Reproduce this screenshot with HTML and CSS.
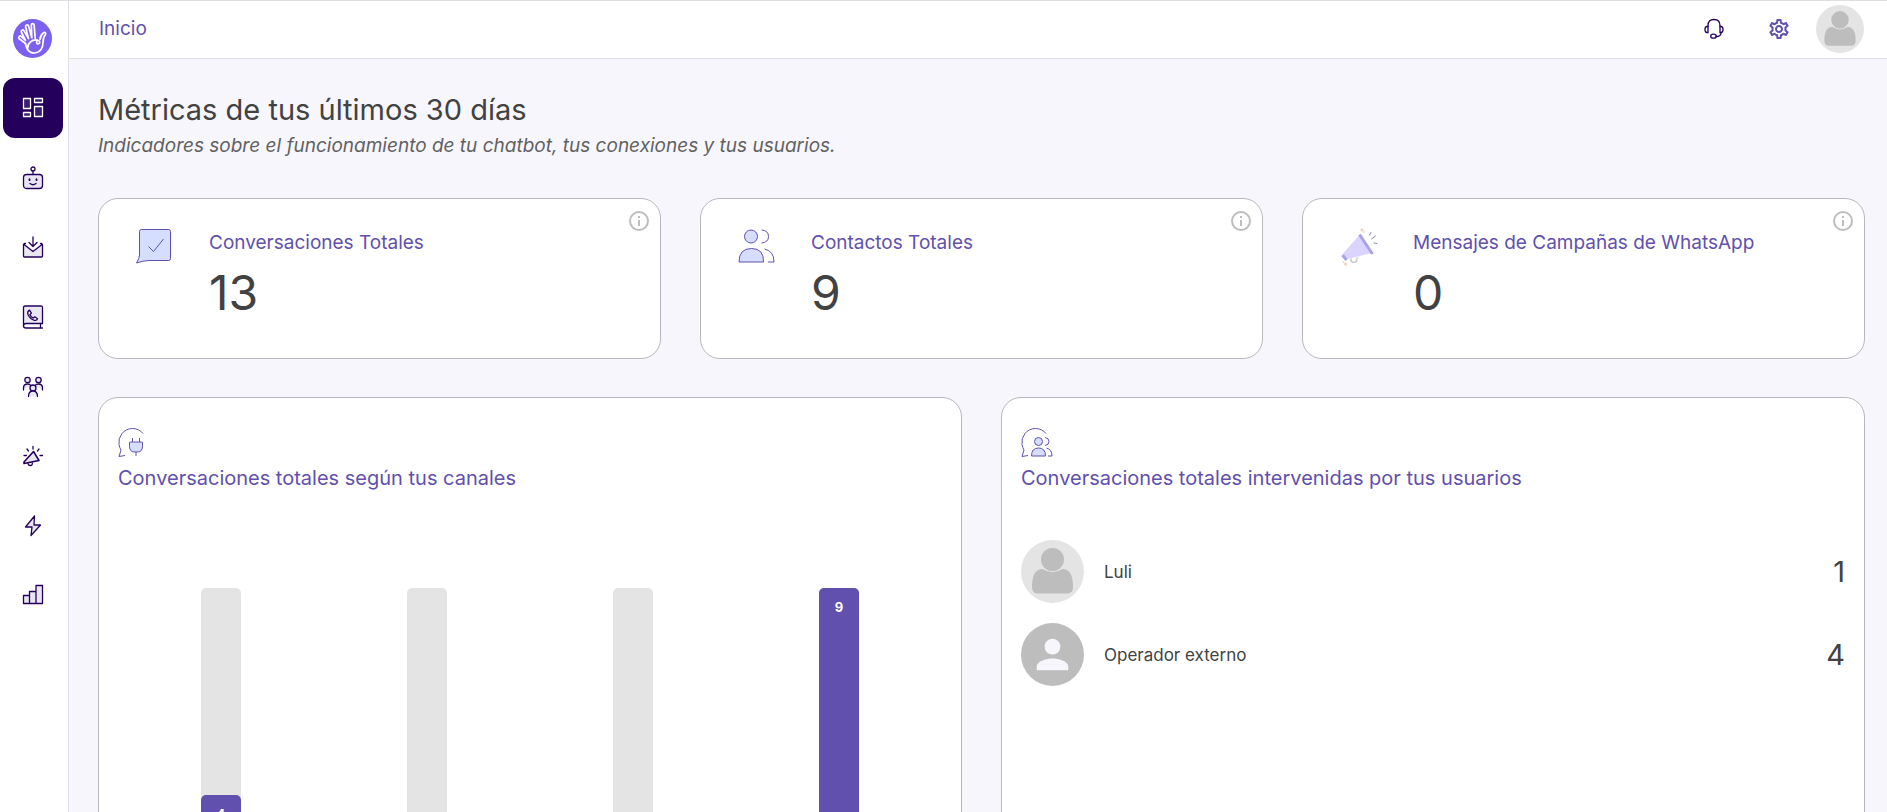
FILE: index.html
```html
<!DOCTYPE html>
<html lang="es">
<head>
<meta charset="utf-8">
<title>Inicio</title>
<link rel="stylesheet" href="styles.css">
</head>
<body>
<div class="app">
  <aside class="sidebar">
    <a class="logo" href="#" aria-label="Inicio">
      <svg viewBox="0 0 39 39" width="39" height="39" fill="none" stroke="#fff" stroke-width="1.7" stroke-linecap="round" stroke-linejoin="round">
        <circle cx="19.500" cy="19.500" r="19.500" fill="#7b61f0" stroke="none"/>
        <path d="M12.500 24.500 6 19.500c-1-1.400.8-3.200 2.200-2.200l4.300 4L8.300 13c-.7-1.700 1.600-2.800 2.600-1.300l4.600 8-2.900-12c-.3-1.900 2.200-2.500 2.900-.8l3.300 11.800L18.300 6c0-1.800 2.500-1.900 2.800-.1l1.200 14"/>
        <path d="M12.500 24.500c1 6 4 10 9.300 9.500 5.500-.5 8.200-5 8.200-10.500 0-3.500.3-5.500 2.300-7.800 1.200-1.600-.6-3-2-1.700-2 1.700-3.300 3.500-3.300 6.500"/>
        <path d="M14.500 30c0-6 4-9.500 9.700-9 2.400.3 3.500 3 1.300 3.700-1.600.4-2.500-1.400-1.500-2.700"/>
      </svg>
    </a>
    <nav class="nav">
      <a class="nav-item active" href="#" aria-label="Inicio">
        <svg viewBox="0 0 24 24" width="24" height="24"><path d="M2.500 2.500h7v10h-7zM13.500 2.500h8v4h-8zM2.500 16.500h7v4h-7zM13.500 10.500h8v10h-8z"/></svg>
      </a>
      <a class="nav-item" href="#" aria-label="Chatbot">
        <svg viewBox="0 0 24 24" width="24" height="24"><rect x="2.500" y="8.500" width="19" height="14" rx="3"/><circle cx="12" cy="3" r="2" fill="none"/><path d="M12 5v3.500M9 17.500q3 2.500 6 0" fill="none"/><path d="M8.500 13.200v1M15.500 13.200v1" stroke-width="1.800"/></svg>
      </a>
      <a class="nav-item" href="#" aria-label="Mensajes">
        <svg viewBox="0 0 24 24" width="24" height="24"><path stroke="none" d="m3 9 9 7 9-7v13H3z"/><path fill="none" d="M4.500 8.500h-1l-1 1V21q0 1 1 1h17q1 0 1-1V9.500l-1-1h-1M3 9.500l9 7 9-7M12 2v9M8 7.500l4 4 4-4"/></svg>
      </a>
      <a class="nav-item" href="#" aria-label="Contactos">
        <svg viewBox="0 0 24 24" width="24" height="24"><path d="M21.500 18.500v-16q0-1.500-1.500-1.500H4Q2.500 1 2.500 2.500v18z"/><path d="M21.500 18.500H5q-2.500 0-2.500 2.200T5 23h16.500M19.500 18.500V23" fill="#fff"/><path d="M8.500 5.200Q6 6.500 7 9.500q2 4.500 6.500 5.800 2.200.4 3-1.500l-2.700-2-1.500 1.300Q9.800 12 8.900 9.500l1.500-1.300z" fill="#fff"/></svg>
      </a>
      <a class="nav-item" href="#" aria-label="Equipo">
        <svg viewBox="0 0 24 24" width="24" height="24"><circle cx="6.500" cy="6" r="2.700"/><circle cx="17.500" cy="6" r="2.700"/><path d="M2.500 16v-2q0-4 4-4 2.500 0 3.300 1.500M21.500 16v-2q0-4-4-4-2.500 0-3.300 1.500"/><circle cx="12" cy="14" r="3"/><path d="M7.500 22.500q0-5.500 4.500-5.500t4.500 5.500"/></svg>
      </a>
      <a class="nav-item" href="#" aria-label="Campañas">
        <svg viewBox="0 0 24 24" width="24" height="24"><path d="m12.500 7.500 5.500 9-15 3V18z" stroke-width="1.600"/><path fill="none" d="M7 19.500q.5 2.200 2.500 2 2 0 1.800-2.500M12 2.500V5M6 5l1.500 2M18 5l-1.500 2M3 11.500h2.500M19 11.500h2.500"/></svg>
      </a>
      <a class="nav-item" href="#" aria-label="Automatizaciones">
        <svg viewBox="0 0 24 24" width="24" height="24"><path d="M13.500 3 4.500 14h6.500l-1 8.500L19.500 12H13z"/></svg>
      </a>
      <a class="nav-item" href="#" aria-label="Reportes">
        <svg viewBox="0 0 24 24" width="24" height="24"><path d="M2.500 12.500h6v8h-6zM8.500 8.500h6.500v12H8.500zM15 2.500h6.500v18H15z"/></svg>
      </a>
    </nav>
  </aside>

  <header class="topbar">
    <span class="crumb">Inicio</span>
    <div class="actions">
      <button class="icon-button" type="button" aria-label="Soporte">
        <svg viewBox="0 0 24 24" width="24" height="24" fill="none" stroke="#24005c" stroke-width="1.300" stroke-linecap="round"><path d="M6 9.500V8.500q0-6 6-6T18 8.500v1M19 16q0 3.500-5 3.500"/><path d="M6 9.500H5q-2 0-2 3t2 3h1zM18 9.500h1q2 0 2 3t-2 3h-1z"/><ellipse cx="11.500" cy="19.200" rx="2.800" ry="2"/></svg>
      </button>
      <button class="icon-button" type="button" aria-label="Configuración">
        <svg viewBox="0 0 24 24" width="24" height="24" fill="#6150ad"><path d="M19.430 12.980c.04-.32.07-.64.07-.98s-.03-.66-.07-.98l2.110-1.650c.19-.15.24-.42.12-.64l-2-3.460c-.09-.16-.26-.25-.44-.25-.06 0-.12.010-.17.030l-2.490 1c-.52-.4-1.080-.73-1.690-.98l-.38-2.650C14.460 2.180 14.250 2 14 2h-4c-.25 0-.46.180-.49.420l-.38 2.650c-.61.250-1.170.59-1.690.98l-2.490-1c-.06-.02-.12-.03-.18-.03-.17 0-.34.090-.43.250l-2 3.460c-.13.220-.07.490.12.640l2.110 1.650c-.04.320-.07.650-.07.980s.03.660.07.980l-2.110 1.650c-.19.150-.24.420-.12.640l2 3.460c.09.160.26.250.44.250.06 0 .12-.01.17-.03l2.490-1c.52.400 1.080.730 1.690.980l.38 2.650c.03.240.24.420.49.420h4c.25 0 .46-.18.49-.42l.38-2.650c.61-.25 1.170-.59 1.690-.98l2.490 1c.06.020.12.030.18.030.17 0 .34-.09.430-.25l2-3.460c.12-.22.07-.49-.12-.64l-2.110-1.650zm-1.980-1.710c.04.310.05.520.05.730 0 .21-.02.430-.05.730l-.14 1.130.89.700 1.080.84-.7 1.210-1.270-.51-1.040-.42-.9.680c-.43.320-.84.560-1.250.730l-1.060.43-.16 1.130-.2 1.350h-1.400l-.19-1.350-.16-1.130-1.060-.43c-.43-.18-.83-.41-1.230-.71l-.91-.7-1.060.43-1.270.51-.7-1.210 1.080-.84.89-.7-.14-1.130c-.03-.31-.05-.54-.05-.74s.02-.43.050-.73l.14-1.130-.89-.7-1.080-.84.7-1.210 1.270.51 1.040.42.9-.68c.43-.32.84-.56 1.250-.73l1.060-.43.16-1.130.2-1.350h1.390l.19 1.350.16 1.130 1.060.43c.43.180.83.410 1.230.71l.91.700 1.060-.43 1.270-.51.7 1.210-1.070.85-.89.700.14 1.130zM12 8c-2.210 0-4 1.790-4 4s1.790 4 4 4 4-1.790 4-4-1.790-4-4-4zm0 6c-1.100 0-2-.9-2-2s.9-2 2-2 2 .9 2 2-.9 2-2 2z"/></svg>
      </button>
      <button class="avatar-button" type="button" aria-label="Perfil">
        <svg viewBox="0 0 63 63" width="48" height="48"><circle cx="31.500" cy="31.500" r="31.500" fill="#e4e4e4"/><circle cx="31.500" cy="19.500" r="11.500" fill="#bdbdbd"/><path d="M11 47q0-18 10.500-18 10 6.500 20 0Q52 29 52 47q0 6.500-6 6.500H17q-6 0-6-6.500z" fill="#bdbdbd"/></svg>
      </button>
    </div>
  </header>

  <main class="content">
    <h1 class="title">Métricas de tus últimos 30 días</h1>
    <p class="subtitle">Indicadores sobre el funcionamiento de tu chatbot, tus conexiones y tus usuarios.</p>

    <section class="stats">
      <article class="card stat">
        <svg class="stat-icon" viewBox="0 0 40 40" width="40" height="40" fill="#d6deff" stroke="#6150ad" stroke-width="1"><path d="M4.500 5.500q0-2 2-2h27q2 0 2 2v27q0 2-2 2H14q-6 .2-12.500 2.500 3-5 3-8z"/><path d="m13.500 20.500 5 5 10-12.500" fill="none"/></svg>
        <div>
          <h2 class="label">Conversaciones Totales</h2>
          <p class="figure">13</p>
        </div>
        <button class="info" type="button" aria-label="Información"><svg viewBox="0 0 20 20" width="20" height="20"><circle cx="10" cy="10" r="9" fill="none" stroke="#bdbdbd" stroke-width="2"/><path d="M9 5h2v2H9zM9 9h2v6H9z" fill="#bdbdbd"/></svg></button>
      </article>
      <article class="card stat">
        <svg class="stat-icon" viewBox="0 0 40 40" width="40" height="40" fill="#d6deff" stroke="#6150ad" stroke-width="1"><circle cx="14" cy="10.500" r="6.500"/><path d="M2 36q0-13.500 12.500-13.500T26.500 36z"/><path d="M24.500 4q7 .5 7 6.500t-7 6.500M27.500 23Q37 25 37 36h-6" fill="none"/></svg>
        <div>
          <h2 class="label">Contactos Totales</h2>
          <p class="figure">9</p>
        </div>
        <button class="info" type="button" aria-label="Información"><svg viewBox="0 0 20 20" width="20" height="20"><circle cx="10" cy="10" r="9" fill="none" stroke="#bdbdbd" stroke-width="2"/><path d="M9 5h2v2H9zM9 9h2v6H9z" fill="#bdbdbd"/></svg></button>
      </article>
      <article class="card stat">
        <svg class="stat-icon" viewBox="0 0 40 40" width="40" height="40" fill="none" stroke-linecap="round"><path d="M20.500 9 4 27.500l4.500 5.500L33 27z" fill="#dad4ff"/><path d="m20.500 8.500 13 19.500M3.500 29l4 5" stroke="#aaa3e4" stroke-width="3" stroke-linecap="butt"/><path d="M12 33q-.5 3 2.500 3.500 4-.3 3.500-4.500" stroke="#c9c9cf" stroke-width="1.500"/><path d="m30.500 9 1.500-2.500M32.500 13l4-3M35 17l3 .500" stroke="#8a83bd" stroke-width="1"/><path d="M22 4h2M23 3v2M25 6h.500M5.500 38h2M6.500 37v2M4 36h.500" stroke="#efcfb8" stroke-width="1.500"/></svg>
        <div>
          <h2 class="label">Mensajes de Campañas de WhatsApp</h2>
          <p class="figure">0</p>
        </div>
        <button class="info" type="button" aria-label="Información"><svg viewBox="0 0 20 20" width="20" height="20"><circle cx="10" cy="10" r="9" fill="none" stroke="#bdbdbd" stroke-width="2"/><path d="M9 5h2v2H9zM9 9h2v6H9z" fill="#bdbdbd"/></svg></button>
      </article>
    </section>

    <section class="panels">
      <article class="card panel">
        <svg class="panel-icon" viewBox="0 0 32 32" width="32" height="32" fill="none" stroke="#6150ad" stroke-width="1"><path d="M25 7.500Q21 2.500 14.500 2.500 8 2.500 4 7.500t-3 11q.5 3 2 5.500L1 30.500l6-1"/><path d="M11.500 16.500q0-.500.500-.500h12q.5 0 .500.500v4q0 5.500-5.500 5.500h-2q-5.500 0-5.500-5.500z" fill="#d6deff"/><path d="M14.500 12v4M21.500 12v4M18 26v4"/></svg>
        <h2 class="panel-title">Conversaciones totales según tus canales</h2>
        <div class="chart">
          <div class="bar"><div class="fill" style="height:44.4%">4</div></div>
          <div class="bar"></div>
          <div class="bar"></div>
          <div class="bar"><div class="fill" style="height:100%">9</div></div>
        </div>
      </article>
      <article class="card panel">
        <svg class="panel-icon" viewBox="0 0 32 32" width="32" height="32" fill="none" stroke="#6150ad" stroke-width="1"><path d="M25 7.500Q21 2.500 14.500 2.500 8 2.500 4 7.500t-3 11q.5 3 2 5.500L1 30.500l6-1"/><circle cx="17.500" cy="15.500" r="4" fill="#d6deff"/><path d="M10.500 30q0-8 7-8t7 8z" fill="#d6deff"/><path d="M24 11.500q4 .5 4 4t-4 4M25.500 22q5.500 1.500 5.500 8h-4"/></svg>
        <h2 class="panel-title">Conversaciones totales intervenidas por tus usuarios</h2>
        <ul class="users">
          <li class="user">
            <svg viewBox="0 0 63 63" width="63" height="63"><circle cx="31.500" cy="31.500" r="31.500" fill="#e4e4e4"/><circle cx="31.500" cy="19.500" r="11.500" fill="#bdbdbd"/><path d="M11 47q0-18 10.500-18 10 6.500 20 0Q52 29 52 47q0 6.500-6 6.500H17q-6 0-6-6.500z" fill="#bdbdbd"/></svg>
            <span class="name">Luli</span><span class="count">1</span>
          </li>
          <li class="user">
            <svg viewBox="0 0 64 64" width="63" height="63"><circle cx="32" cy="32" r="32" fill="#bdbdbd"/><circle cx="32" cy="24" r="8" fill="#f7f6fd"/><path d="M16 48v-4c0-5.300 10.700-8 16-8s16 2.700 16 8v4z" fill="#f7f6fd"/></svg>
            <span class="name">Operador externo</span><span class="count">4</span>
          </li>
        </ul>
      </article>
    </section>
  </main>
</div>
</body>
</html>
```
FILE: styles.css
```css
* { box-sizing: border-box; }

body {
  margin: 0;
  font-family: Inter, "Liberation Sans", sans-serif;
  color: #424242;
  background: #f7f6fd;
}

h1, h2, p, ul { margin: 0; padding: 0; font-weight: 400; }

button { padding: 0; border: 0; background: none; cursor: pointer; }

svg { display: block; flex: none; }

.app {
  display: grid;
  grid-template: auto 1fr / 69px 1fr;
  height: 100vh;
  border-top: 1px solid #dedee3;
}

.sidebar {
  grid-row: 1 / 3;
  display: flex;
  flex-direction: column;
  align-items: center;
  gap: 20px;
  padding: 18px 5px 0 2px;
  background: #fff;
  border-right: 1px solid #dedee3;
}

.nav {
  display: flex;
  flex-direction: column;
  justify-content: space-between;
  height: 547px;
}

.nav-item {
  display: grid;
  place-items: center;
  width: 60px;
  height: 60px;
  border-radius: 12px;
  fill: #e9e6f3;
  stroke: #24005c;
  stroke-width: 1.3;
  stroke-linejoin: round;
  stroke-linecap: round;
}

.active {
  background: #24005c;
  fill: #3d1d70;
  stroke: #fff;
}

.topbar {
  display: flex;
  align-items: center;
  justify-content: space-between;
  height: 58px;
  padding: 0 23px 2px 30px;
  background: #fff;
  border-bottom: 1px solid #dedee3;
}

.crumb { font-size: 19px; line-height: 24px; color: #6150ad; }

.actions { display: flex; align-items: center; gap: 9px; }

.icon-button {
  display: grid;
  place-items: center;
  width: 56px;
  height: 40px;
}

.content {
  padding: 33px 22px 32px 29px;
  overflow: auto;
  scrollbar-width: none;
}

.title { font-size: 29px; line-height: 36px; }

.subtitle {
  margin-top: 4px;
  font-size: 19px;
  font-style: italic;
  line-height: 28px;
  color: #616161;
}

.card {
  background: #fff;
  border: 1px solid #b8b8bc;
  border-radius: 20px;
}

.stats {
  display: grid;
  grid-template-columns: repeat(3, 1fr);
  gap: 39px;
  margin-top: 38px;
}

.stat {
  position: relative;
  display: flex;
  gap: 34px;
  padding: 27px 36px 32px;
}

.label { font-size: 19px; line-height: 34px; color: #6150ad; }

.figure { font-size: 48px; line-height: 66px; }

.info { position: absolute; top: 12px; right: 11px; }

.panels {
  display: grid;
  grid-template-columns: repeat(2, 1fr);
  gap: 39px;
  margin-top: 38px;
}

.panel { padding: 28px 19px; }

.panel-title {
  margin-top: 4px;
  font-size: 20px;
  line-height: 32px;
  color: #6150ad;
}

.chart {
  display: grid;
  grid-template-columns: repeat(4, 1fr);
  justify-items: center;
  margin-top: 94px;
}

.bar {
  display: flex;
  align-items: flex-end;
  width: 40px;
  height: 373px;
  border-radius: 5px;
  background: #e4e4e4;
}

.fill {
  width: 100%;
  padding-top: 11px;
  border-radius: 5px;
  background: #6150ad;
  color: #fff;
  font-size: 13px;
  font-weight: 700;
  line-height: 16px;
  text-align: center;
}

.users {
  display: flex;
  flex-direction: column;
  gap: 20px;
  margin-top: 46px;
  list-style: none;
}

.user { display: flex; align-items: center; gap: 20px; }

.name { flex: 1; font-size: 17px; line-height: 24px; }

.count { font-size: 29px; line-height: 36px; }
```
